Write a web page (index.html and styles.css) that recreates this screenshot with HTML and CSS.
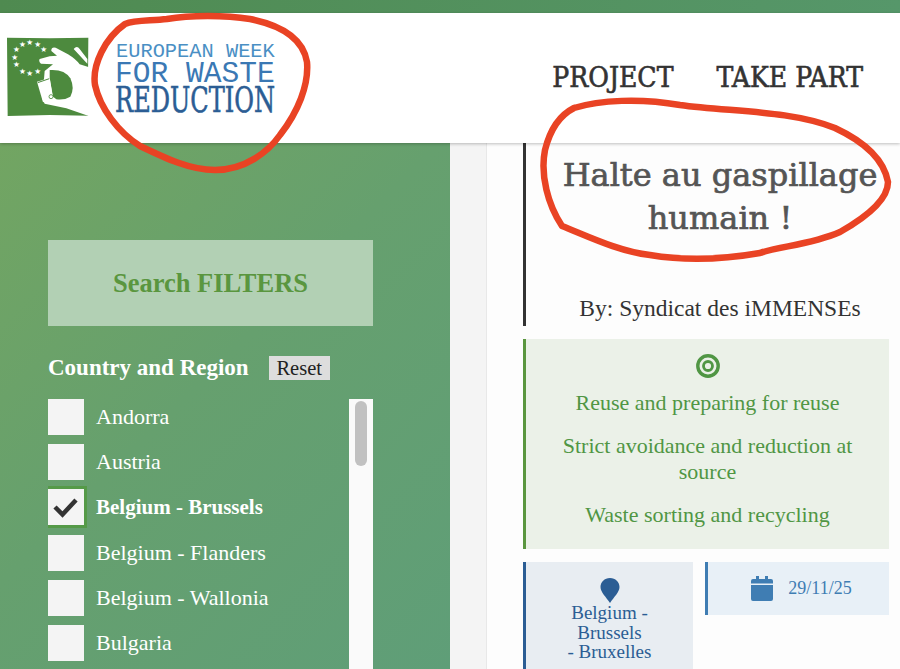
FILE: index.html
```html
<!DOCTYPE html>
<html lang="en">
<head>
  <meta charset="UTF-8" />
  <title>European Week for Waste Reduction</title>
  <link rel="stylesheet" href="styles.css">
</head>
<body>

<div class="topbar"></div>

<header class="header">
  <a class="logo">
    <svg class="logo-mark" width="83" height="82" viewBox="22 26 249 246">
      <path fill="#4d8a3e" d="M22 28 L150 30 L266 28 L265 150 L266 262 L150 260 L24 263 L23 150 Z"/>
      <!-- hand -->
      <path fill="#fff" d="M120 92 L150 84 L172 82 L155 68 Q154 55 168 58 L205 78 Q228 92 240 108 L272 118 L272 264 L265 262 L200 240 L135 226 L128 212 L135 128 L160 108 L124 106 Q116 100 120 92 Z"/>
      <path fill="#fff" d="M222 62 Q232 50 240 62 L263 92 L263 106 Z"/>
      <!-- inside of the fingers -->
      <path fill="#4d8a3e" d="M150 125 Q195 122 212 150 Q226 180 212 205 Q195 216 170 213 L160 205 L150 150 Z"/>
      <!-- bin -->
      <path fill="#fff" d="M112 160 L150 148 L160 212 L130 222 Z"/>
      <path fill="none" stroke="#4d8a3e" stroke-width="3" d="M114 163 L149 151"/>
      <circle cx="154" cy="205" r="6" fill="#fff" stroke="#4d8a3e" stroke-width="2.500"/>
      <g fill="#fff" font-family="'DejaVu Sans', sans-serif" font-size="23" text-anchor="middle">
        <text x="90" y="49">★</text><text x="68" y="55">★</text><text x="114" y="55">★</text>
        <text x="50" y="71">★</text><text x="132" y="71">★</text><text x="45" y="94">★</text>
        <text x="50" y="117">★</text><text x="68" y="136">★</text><text x="90" y="142">★</text>
        <text x="114" y="136">★</text>
      </g>
    </svg>
    <svg class="logo-text" width="170" height="92" viewBox="0 0 170 92">
      <text class="logo-line1" transform="translate(1 20) scale(.97 1)">EUROPEAN WEEK</text>
      <text class="logo-line2" transform="translate(0 45) scale(1.02 1)">FOR WASTE</text>
      <text class="logo-line3" transform="translate(0 75) scale(.688 1)">REDUCTION</text>
    </svg>
  </a>
  <nav class="nav">
    <a>PROJECT</a>
    <a>TAKE PART</a>
  </nav>
</header>

<main class="page">
  <aside class="sidebar">
    <div class="search-title">Search FILTERS</div>

    <div class="filter-head">
      <span class="filter-name">Country and Region</span>
      <button class="reset">Reset</button>
    </div>

    <div class="filter-box">
      <ul class="country-list">
        <li><span class="check"></span>Andorra</li>
        <li><span class="check"></span>Austria</li>
        <li class="selected">
          <span class="check">
            <svg width="26" height="22" viewBox="0 0 26 22"><path d="M2 11 L9.500 18.500 L23 4" fill="none" stroke="#333" stroke-width="4.500"/></svg>
          </span>Belgium - Brussels
        </li>
        <li><span class="check"></span>Belgium - Flanders</li>
        <li><span class="check"></span>Belgium - Wallonia</li>
        <li><span class="check"></span>Bulgaria</li>
      </ul>
      <div class="scrollbar"><div class="thumb"></div></div>
    </div>
  </aside>

  <section class="content">
    <div class="title-block">
      <h1>Halte au gaspillage humain !</h1>
      <p class="author">By: Syndicat des iMMENSEs</p>
    </div>

    <div class="themes">
      <svg class="target" width="24" height="24" viewBox="0 0 24 24">
        <circle cx="12" cy="12" r="10.200" fill="none" stroke="#509644" stroke-width="3.400"/>
        <circle cx="12" cy="12" r="4.500" fill="none" stroke="#509644" stroke-width="2.800"/>
      </svg>
      <p>Reuse and preparing for reuse</p>
      <p>Strict avoidance and reduction at source</p>
      <p>Waste sorting and recycling</p>
    </div>

    <div class="info-row">
      <div class="place">
        <svg width="20" height="25" viewBox="0 0 20 25"><path fill="#2b5d94" d="M10 0 C15.500 0 19.500 4 19.500 9 C19.500 14 14 19 10 25 C6 19 .5 14 .5 9 C.5 4 4.500 0 10 0 Z"/></svg>
        <div>Belgium -<br>Brussels<br>- Bruxelles</div>
      </div>
      <div class="date">
        <svg width="22" height="25" viewBox="0 0 22 25">
          <path fill="#3f7db3" d="M0 9 H22 V23 Q22 25 20 25 H2 Q0 25 0 23 Z M2 3 H5 V0 H8 V3 H14 V0 H17 V3 H20 Q22 3 22 5 V7.500 H0 V5 Q0 3 2 3 Z"/>
        </svg>
        <span>29/11/25</span>
      </div>
    </div>
  </section>
</main>

<!-- hand drawn red circles on top of the page -->
<svg class="scribble" width="900" height="669" viewBox="0 0 900 669">
  <g fill="none" stroke="#e94324" stroke-width="6.500" stroke-linecap="round" stroke-linejoin="round">
    <path d="M167 19 C190 15 225 15 250 19 C280 25 303 38 307 62 C309 85 298 112 280 135 C268 152 245 170 215 170 C190 170 165 158 140 146 C118 132 100 108 95 85 C92 65 105 38 125 24 C135 20 150 21 167 19"/>
    <path d="M574 108 C600 100 640 98 680 105 C730 112 790 110 835 128 C865 142 884 160 888 182 C888 198 870 215 840 232 C810 245 780 246 760 253 C720 260 680 260 650 255 C620 252 585 235 562 226 C548 205 540 175 545 150 C550 130 560 115 574 108"/>
  </g>
</svg>

</body>
</html>
```

FILE: styles.css
```css
* {
  box-sizing: border-box;
}

html, body {
  height: 100%;
}

body {
  margin: 0;
  overflow: hidden;
  background: #f4f4f4;
  font-family: "Liberation Serif", serif;
}

.topbar {
  height: 13px;
  background: linear-gradient(to right, #4f8a50, #56976a);
}

/* header */
.header {
  height: 130px;
  background: #fff;
  display: flex;
  justify-content: space-between;
  box-shadow: 0 1px 3px rgba(0, 0, 0, .25);
  padding: 24px 37px 0 7px;
  position: relative;
  z-index: 1;
}

.logo {
  display: flex;
  gap: 25px;
  align-items: flex-start;
}

.logo-mark,
.logo-text {
  display: block;
}

.logo-text {
  font-family: "Liberation Mono", monospace;
}

.logo-line1 {
  font-size: 21px;
  fill: #4a8fc4;
}

.logo-line2 {
  font-size: 29px;
  fill: #3a78b4;
}

.logo-line3 {
  font-family: "DejaVu Serif", serif;
  font-size: 35px;
  fill: #2b5d94;
  stroke: #2b5d94;
  stroke-width: .6px;
}

.nav {
  display: flex;
  gap: 43px;
  padding-top: 24px;
  font-family: "DejaVu Serif", serif;
  font-stretch: condensed;
  font-size: 28px;
  color: #333;
  -webkit-text-stroke: .6px #333;
}

/* page */
.page {
  display: flex;
  height: 526px;
}

.sidebar {
  width: 450px;
  padding: 97px 77px 0 48px;
  background: linear-gradient(135deg, #72a562, #66a06e 45%, #5f9e78);
}

.search-title {
  height: 86px;
  background: #b2d0b4;
  color: #5a963f;
  font-size: 26.500px;
  font-weight: bold;
  display: flex;
  align-items: center;
  justify-content: center;
}

.filter-head {
  display: flex;
  align-items: center;
  gap: 20px;
  margin-top: 29px;
  color: #fff;
  font-size: 23px;
  font-weight: bold;
}

.reset {
  width: 61px;
  height: 24px;
  padding: 0;
  border: none;
  background: #ddd;
  color: #222;
  font-family: "Liberation Serif", serif;
  font-size: 20.500px;
}

.filter-box {
  display: flex;
  justify-content: space-between;
  margin-top: 18px;
}

.country-list {
  list-style: none;
  margin: 0;
  padding: 0;
  color: #fff;
  font-size: 22px;
}

.country-list li {
  display: flex;
  align-items: center;
  gap: 12px;
  height: 36px;
  margin-bottom: 9.200px;
}

.country-list .selected {
  font-size: 21px;
  font-weight: bold;
}

.check {
  width: 36px;
  height: 36px;
  background: #f4f4f4;
  display: flex;
  align-items: center;
  justify-content: center;
}

.selected .check {
  box-shadow: 3px 0 0 #559a48, 0 -3px 0 #559a48, 0 3px 0 #559a48, 3px 3px 0 #559a48, 3px -3px 0 #559a48;
}

.scrollbar {
  width: 24px;
  height: 300px;
  background: #fafafa;
  padding: 2px 6px;
}

.thumb {
  height: 65px;
  border-radius: 7px;
  background: #c1c1c1;
}

/* right column */
.content {
  flex: 1;
  background: #fdfdfd;
  margin-left: 36px;
  padding-right: 11px;
  border-left: 1px solid #e8e8e8;
}

.title-block {
  border-left: 3px solid #333;
  margin-left: 36px;
  height: 183px;
  text-align: center;
}

.title-block h1 {
  margin: 0;
  padding: 11px 0 0 25px;
  font-family: "DejaVu Serif", serif;
  font-weight: normal;
  font-size: 32px;
  line-height: 43px;
  color: #555;
  -webkit-text-stroke: .7px #555;
}

.author {
  margin: 55px 0 0 25px;
  font-size: 23.500px;
  color: #333;
}

.themes {
  margin: 13px 0 0 36px;
  height: 210px;
  background: #ebf1e8;
  border-left: 3px solid #5a963f;
  padding: 15px 24px 0;
  text-align: center;
  color: #509644;
  font-size: 22px;
}

.target {
  display: block;
  margin: 0 auto 12px;
}

.themes p {
  margin: 0 0 17px;
  line-height: 26px;
}

.info-row {
  display: flex;
  gap: 12px;
  margin: 13px 0 0 36px;
  align-items: flex-start;
}

.place {
  width: 170px;
  height: 110px;
  padding-top: 16px;
  background: #e8edf2;
  border-left: 3px solid #2b5d94;
  text-align: center;
  color: #2b5d94;
  font-size: 19px;
  line-height: 19.500px;
}

.place svg {
  display: block;
  margin: 0 auto;
}

.date {
  flex: 1;
  height: 53px;
  padding-left: 6px;
  background: #e8f0f7;
  border-left: 3px solid #3f7db3;
  display: flex;
  align-items: center;
  justify-content: center;
  gap: 15px;
  color: #3f7db3;
  font-size: 18px;
}

/* annotation layer */
.scribble {
  position: absolute;
  top: 0;
  left: 0;
  z-index: 2;
  pointer-events: none;
}
```
